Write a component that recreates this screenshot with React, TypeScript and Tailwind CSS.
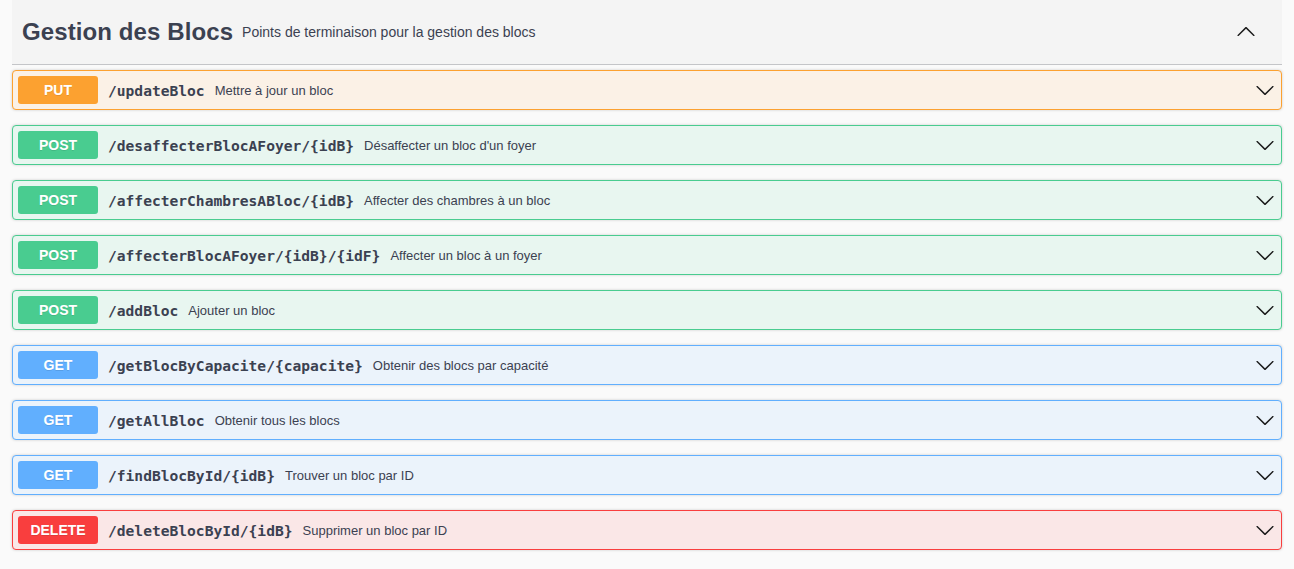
import React from 'react';

type Method = 'PUT' | 'POST' | 'GET' | 'DELETE';

const styles: Record<Method, { row: string; badge: string }> = {
  PUT: { row: 'bg-[#fbf1e6] border-[#fca130]', badge: 'bg-[#fca130]' },
  POST: { row: 'bg-[#e8f6f0] border-[#49cc90]', badge: 'bg-[#49cc90]' },
  GET: { row: 'bg-[#ebf3fb] border-[#61affe]', badge: 'bg-[#61affe]' },
  DELETE: { row: 'bg-[#fae7e7] border-[#f93e3e]', badge: 'bg-[#f93e3e]' },
};

const endpoints: { method: Method; path: string; desc: string }[] = [
  { method: 'PUT', path: '/updateBloc', desc: 'Mettre à jour un bloc' },
  { method: 'POST', path: '/desaffecterBlocAFoyer/{idB}', desc: "Désaffecter un bloc d'un foyer" },
  { method: 'POST', path: '/affecterChambresABloc/{idB}', desc: 'Affecter des chambres à un bloc' },
  { method: 'POST', path: '/affecterBlocAFoyer/{idB}/{idF}', desc: 'Affecter un bloc à un foyer' },
  { method: 'POST', path: '/addBloc', desc: 'Ajouter un bloc' },
  { method: 'GET', path: '/getBlocByCapacite/{capacite}', desc: 'Obtenir des blocs par capacité' },
  { method: 'GET', path: '/getAllBloc', desc: 'Obtenir tous les blocs' },
  { method: 'GET', path: '/findBlocById/{idB}', desc: 'Trouver un bloc par ID' },
  { method: 'DELETE', path: '/deleteBlocById/{idB}', desc: 'Supprimer un bloc par ID' },
];

const Arrow = ({ up = false }: { up?: boolean }) => (
  <svg
    viewBox="0 0 20 20"
    className={`w-5 h-5 ${up ? 'rotate-180' : ''}`}
    fill="#1b1b1b"
  >
    <path d="M17.418 6.109c.272-.268.709-.268.979 0s.271.701 0 .969l-7.908 7.83c-.27.268-.707.268-.979 0l-7.908-7.83c-.27-.268-.27-.701 0-.969.271-.268.709-.268.979 0L10 13.25l7.418-7.141z" />
  </svg>
);

export default function App() {
  return (
    <div className="min-h-screen bg-[#fafafa] px-3 text-[#3b4151] font-['Liberation_Sans',Arial,sans-serif]">
      {/* Tag header */}
      <div className="h-[65px] mb-[5px] flex items-center bg-[#f4f4f4] border-b border-[#c4c5c8] pl-[10px] pr-[26px]">
        <h3 className="text-[24px] font-bold tracking-[0.1px]">Gestion des Blocs</h3>
        <span className="ml-[9px] text-[14px] mt-[1px]">Points de terminaison pour la gestion des blocs</span>
        <div className="ml-auto">
          <Arrow up />
        </div>
      </div>

      {/* Operations */}
      {endpoints.map((e) => (
        <div
          key={e.path}
          className={`h-10 mb-[15px] flex items-center border rounded-[4px] p-[5px] shadow-[0_0_3px_rgba(0,0,0,0.19)] ${styles[e.method].row}`}
        >
          <span
            className={`w-20 h-7 pt-[1px] flex items-center justify-center rounded-[3px] text-white text-[14px] font-bold [text-shadow:0_1px_0_rgba(0,0,0,0.1)] ${styles[e.method].badge}`}
          >
            {e.method}
          </span>
          <span className="mt-[2px] pl-[10px] pr-[10px] text-[14.6px] font-bold font-['DejaVu_Sans_Mono',monospace]">
            {e.path}
          </span>
          <span className="mt-[2px] text-[13px]">{e.desc}</span>
          <div className="ml-auto mr-[1px]">
            <Arrow />
          </div>
        </div>
      ))}
    </div>
  );
}
